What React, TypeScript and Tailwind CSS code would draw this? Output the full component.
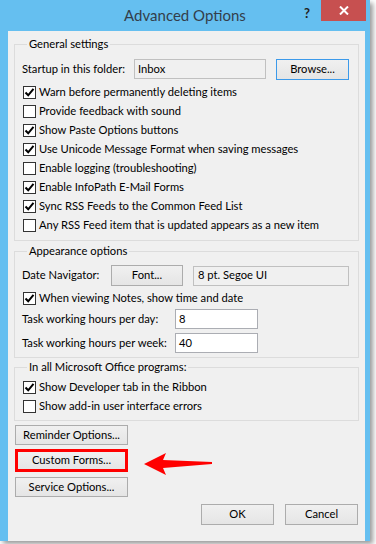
import React from "react";

const font = { fontFamily: '"Segoe UI", Lato, "Noto Sans", sans-serif' };

function CheckBox({ checked }: { checked?: boolean }) {
  return (
    <span className="flex h-[13px] w-[13px] shrink-0 items-center justify-center border border-[#333333] bg-white">
      {checked && (
        <svg width="11" height="11" viewBox="0 0 11 11">
          <path d="M1.5 5.5 L4.2 8.3 L9.5 1.8" fill="none" stroke="#000" strokeWidth="2" />
        </svg>
      )}
    </span>
  );
}

function CheckRow({ label, checked }: { label: string; checked?: boolean }) {
  return (
    <div className="flex h-[19px] items-center gap-[3px] whitespace-nowrap pl-[1px]">
      <CheckBox checked={checked} />
      <span>{label}</span>
    </div>
  );
}

function Btn({ children, className = "" }: { children: React.ReactNode; className?: string }) {
  return (
    <button
      className={`flex items-center justify-center whitespace-nowrap border border-[#acacac] bg-gradient-to-b from-[#f0f0f0] to-[#e5e5e5] text-black ${className}`}
    >
      {children}
    </button>
  );
}

function Group({ title, children, className = "" }: { title: string; children: React.ReactNode; className?: string }) {
  return (
    <fieldset className={`border border-[#dcdcdc] px-[7px] ${className}`}>
      <legend className="ml-[5px] whitespace-nowrap px-[2px] leading-[16px]">{title}</legend>
      {children}
    </fieldset>
  );
}

export default function App() {
  return (
    <div className="relative h-[544px] w-[376px] overflow-hidden bg-white text-[11.2px] text-black" style={font}>
      <div className="flex h-[541px] w-[370px] flex-col bg-[#65bff0] shadow-[3px_3px_5px_rgba(0,0,0,0.4)]">
        {/* title bar */}
        <div className="relative flex h-[31px] shrink-0 items-center justify-center">
          <span className="text-[15px] leading-none text-[#333e4b]">Advanced Options</span>
          <span className="absolute left-[304px] top-[4px] text-[13px] font-bold text-[#222]">?</span>
          <div className="absolute right-[4px] top-0 flex h-[21px] w-[45px] items-center justify-center bg-[#c75050]">
            <svg width="10" height="9" viewBox="0 0 10 9">
              <path d="M1 0.5 L9 8.5 M9 0.5 L1 8.5" stroke="#fff" strokeWidth="2" />
            </svg>
          </div>
        </div>

        {/* client */}
        <div className="ml-[8px] mr-[5px] flex flex-1 flex-col bg-[#f0f0f0] px-[6px] pb-[9px] pt-[5px]">
          <Group title="General settings" className="pb-[5px]">
            <div className="mt-[6px] flex h-[22px] items-center whitespace-nowrap">
              <span className="w-[112px]">Startup in this folder:</span>
              <div className="flex h-[20px] w-[132px] items-center border border-[#c0c0c0] bg-[#f0f0f0] px-[3px]">Inbox</div>
              <Btn className="ml-[10px] h-[21px] w-[73px] !border-[#3c9aea]">Browse...</Btn>
            </div>
            <div className="mt-[3px] flex flex-col">
              <CheckRow checked label="Warn before permanently deleting items" />
              <CheckRow label="Provide feedback with sound" />
              <CheckRow checked label="Show Paste Options buttons" />
              <CheckRow checked label="Use Unicode Message Format when saving messages" />
              <CheckRow label="Enable logging (troubleshooting)" />
              <CheckRow checked label="Enable InfoPath E-Mail Forms" />
              <CheckRow checked label="Sync RSS Feeds to the Common Feed List" />
              <CheckRow label="Any RSS Feed item that is updated appears as a new item" />
            </div>
          </Group>

          <Group title="Appearance options" className="mt-[2px] pb-[4px]">
            <div className="mt-[6px] flex h-[21px] items-center whitespace-nowrap">
              <span className="w-[89px]">Date Navigator:</span>
              <Btn className="h-[21px] w-[72px]">Font...</Btn>
              <div className="ml-[10px] flex h-[20px] w-[156px] items-center border border-[#c0c0c0] bg-[#f0f0f0] px-[4px]">8 pt. Segoe UI</div>
            </div>
            <div className="mt-[3px]">
              <CheckRow checked label="When viewing Notes, show time and date" />
            </div>
            <div className="mt-[1px] flex flex-col gap-[4px] whitespace-nowrap">
              <div className="flex h-[20px] items-center">
                <span className="w-[153px]">Task working hours per day:</span>
                <div className="flex h-[20px] w-[83px] items-center border border-[#abadb3] bg-white px-[3px]">8</div>
              </div>
              <div className="flex h-[20px] items-center">
                <span className="w-[153px]">Task working hours per week:</span>
                <div className="flex h-[20px] w-[83px] items-center border border-[#abadb3] bg-white px-[3px]">40</div>
              </div>
            </div>
          </Group>

          <Group title="In all Microsoft Office programs:" className="mt-[1px] pb-[4px]">
            <div className="mt-[3px] flex flex-col">
              <CheckRow checked label="Show Developer tab in the Ribbon" />
              <CheckRow label="Show add-in user interface errors" />
            </div>
          </Group>

          <div className="mt-[4px] flex flex-col items-start pl-[1px]">
            <Btn className="h-[20px] w-[113px]">Reminder Options...</Btn>
            <Btn className="mt-[4px] h-[23px] w-[113px] !border-[3px] !border-[#ff0000]">Custom Forms...</Btn>
            <Btn className="mt-[5px] h-[20px] w-[113px]">Service Options...</Btn>
          </div>

          <div className="mt-[7px] flex justify-end gap-[11px] pr-[1px]">
            <Btn className="h-[21px] w-[73px]">OK</Btn>
            <Btn className="h-[21px] w-[73px]">Cancel</Btn>
          </div>
        </div>
      </div>

      {/* red pointer arrow */}
      <svg className="absolute left-[143px] top-[452px]" width="72" height="25" viewBox="0 0 72 25">
        <polygon points="1,12 23,1 20,8 69,10 69,12 20,16 23,23" fill="#ff0000" />
      </svg>
    </div>
  );
}
